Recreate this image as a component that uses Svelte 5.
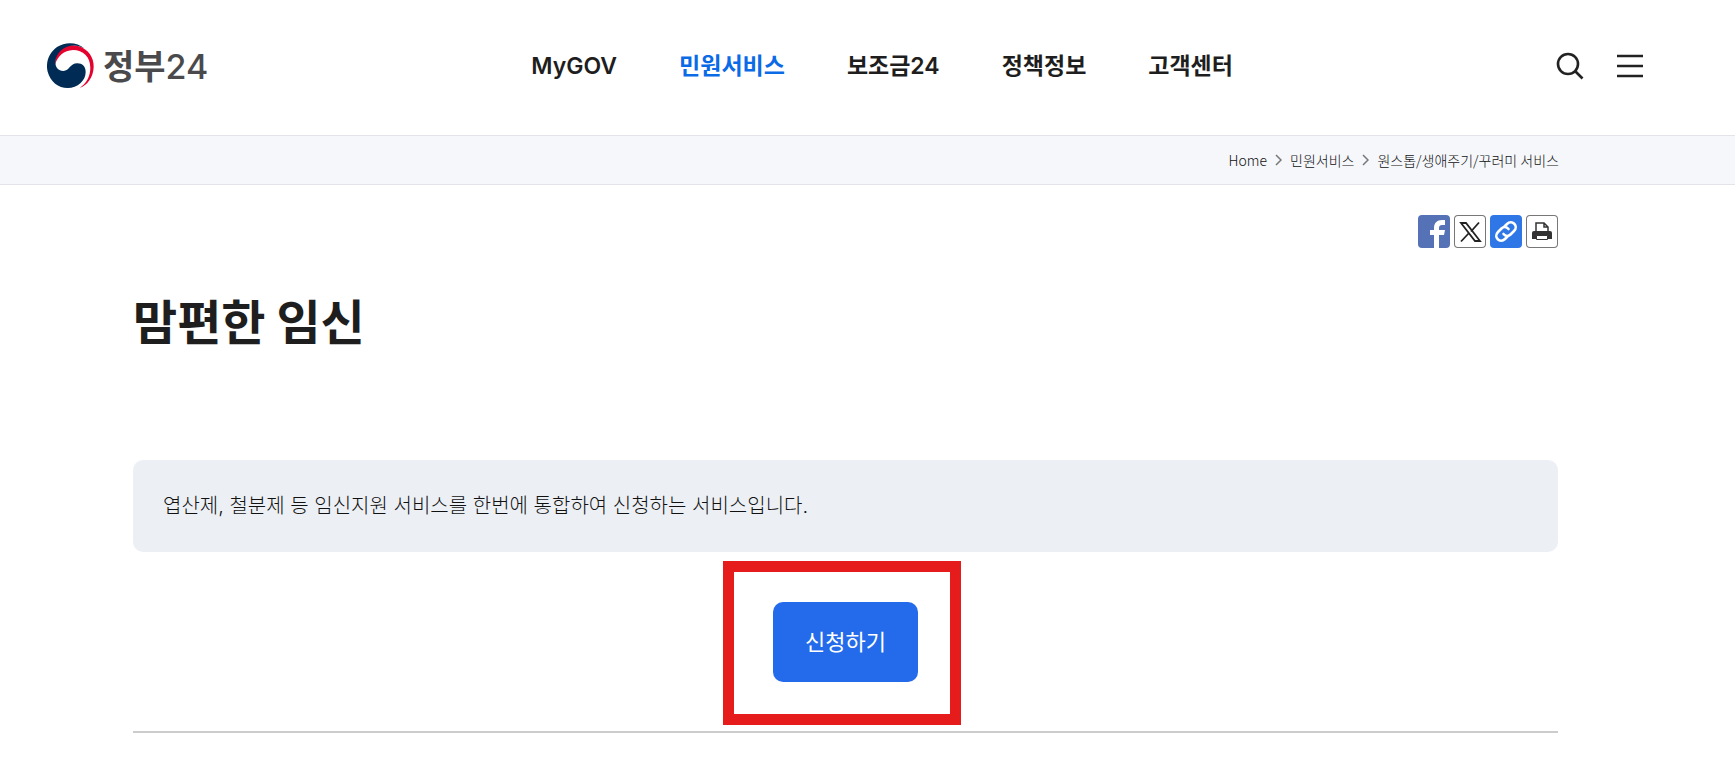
<script>
  const menu = [
    { label: 'MyGOV' },
    { label: '민원서비스', active: true },
    { label: '보조금24' },
    { label: '정책정보' },
    { label: '고객센터' },
  ]
  const crumbs = ['Home', '민원서비스', '원스톱/생애주기/꾸러미 서비스']
</script>

<header class="header">
  <a class="logo" href="#home">
    <svg class="emblem" viewBox="0 0 141 135" aria-hidden="true">
      <path fill="#e4032e" d="M26 29C42 7 72 2 96 10C123 19 141 43 140 72C139 103 121 127 98 135C119 120 130 99 130 74C130 41 108 21 78 21C51 22 31 40 24 65Z" />
      <path fill="#002b54" d="M112 16C91 -3 55 -5 30 12C6 29 -5 58 2 86C10 116 34 135 62 135C92 135 116 113 116 87C116 71 106 61 91 61C68 61 68 84 49 84C34 84 25 73 25 57C27 27 56 4 88 8C97 9 105 12 112 16Z" />
    </svg>
    <span>정부<span class="logo-num">24</span></span>
  </a>

  <nav class="nav">
    {#each menu as item}
      <a class="nav-item" class:active={item.active} href="#menu">{item.label}</a>
    {/each}
  </nav>

  <div class="tools">
    <button class="tool" aria-label="검색">
      <svg viewBox="0 0 28 28">
        <circle cx="12" cy="12" r="10" />
        <path d="M19 19L26.500 26.500" />
      </svg>
    </button>
    <button class="tool" aria-label="전체메뉴">
      <svg viewBox="0 0 28 28"><path d="M1 4h26M1 14h26M1 24h26" /></svg>
    </button>
  </div>
</header>

<nav class="breadcrumb" aria-label="현재 위치">
  {#each crumbs as crumb, i}
    {#if i > 0}
      <svg class="chevron" viewBox="0 0 7 12" aria-hidden="true"><path d="M1 1l5 5l-5 5" /></svg>
    {/if}
    <a href="#crumb">{crumb}</a>
  {/each}
</nav>

<main class="content">
  <div class="share">
    <button class="share-btn facebook" aria-label="페이스북">
      <svg viewBox="0 0 32 33"><path fill="#fff" d="M16 33V20h-4v-5h4v-2c0-5 3-8 8-8h3v5h-3c-2 0-3 1-3 3v2h6l-1 5h-5v13z" /></svg>
    </button>
    <button class="share-btn" aria-label="X">
      <svg viewBox="0 0 32 33">
        <path fill="none" stroke="#222" stroke-width="1.800" d="M7 8h5l14 18h-5zM25 7.500l-8 9M15 18l-8 8.500" />
      </svg>
    </button>
    <button class="share-btn link" aria-label="링크 복사">
      <svg viewBox="0 0 32 33">
        <g fill="none" stroke="#fff" stroke-width="2.600" stroke-linecap="round">
          <path d="M14.500 11.500l2.500-2.500c5-5 12 2 7 7l-3.500 3.500c-2 2-5 2-7-0.500" />
          <path d="M17.500 21.500l-2.500 2.500c-5 5-12-2-7-7l3.500-3.500c2-2 5-2 7 0.500" />
        </g>
      </svg>
    </button>
    <button class="share-btn" aria-label="인쇄">
      <svg viewBox="0 0 32 33">
        <path fill="#fff" stroke="#333" stroke-width="1.500" d="M10 17V8h8l4 4v5M18 8v4h4" />
        <path fill="#333" d="M8 16h16q2 0 2 2v6H6v-6q0-2 2-2z" />
        <path fill="#fff" stroke="#333" d="M10.500 20.500h11v4h-11z" />
      </svg>
    </button>
  </div>

  <h1>맘편한 임신</h1>

  <p class="intro">엽산제, 철분제 등 임신지원 서비스를 한번에 통합하여 신청하는 서비스입니다.</p>

  <div class="actions">
    <div class="highlight">
      <button class="apply">신청하기</button>
    </div>
  </div>
</main>

<style>
  :global(body) { margin: 0; background: #fff; color: #1e1e1e; font-family: 'Noto Sans CJK KR', sans-serif; }
  a { color: inherit; text-decoration: none; }
  button { padding: 0; border: none; background: none; font-family: inherit; cursor: pointer; }
  svg { display: block; }

  .header { display: flex; align-items: center; justify-content: space-between; height: 135px; padding: 0 91px 4px 47px; box-sizing: border-box; }
  .logo { display: flex; align-items: center; gap: 9px; color: #4a4a4c; font-size: 34px; line-height: 45px; font-weight: 700; }
  .logo-num { font-family: Inter, sans-serif; font-weight: 500; }
  .emblem { width: 47px; height: 45px; }
  .nav { display: flex; gap: 62px; }
  .nav-item { font-family: Inter, 'Noto Sans CJK KR', sans-serif; font-size: 23px; line-height: 32px; font-weight: 600; }
  .nav-item.active { color: #0b6ae6; }
  .tools { display: flex; gap: 32px; }
  .tool { width: 28px; height: 28px; }
  .tool svg { fill: none; stroke: #222; stroke-width: 2.6; }

  .breadcrumb { display: flex; align-items: center; justify-content: flex-end; gap: 8px; height: 48px; padding: 0 176px; border: 1px solid #e2e4ea; border-width: 1px 0; background: #f5f7fb; color: #111; font-size: 14px; font-weight: 300; line-height: 20px; }
  .chevron { width: 7px; height: 12px; fill: none; stroke: #777; stroke-width: 1.5; }

  .content { margin: 0 177px 0 133px; border-bottom: 2px solid #ccc; }
  .share { display: flex; justify-content: flex-end; gap: 4px; padding-top: 30px; }
  .share-btn { width: 32px; height: 33px; border-radius: 4px; box-shadow: inset 0 0 0 1px #777; }
  .facebook { background: #5472b5; box-shadow: none; }
  .link { background: #2f76e6; box-shadow: none; }

  h1 { margin: 35px 0 0; font-size: 48px; line-height: 72px; font-weight: 700; }
  .intro { margin: 105px 0 0; padding: 30px; border-radius: 10px; background: #ecf0f5; color: #111; font-family: Inter, 'Noto Sans CJK KR', sans-serif; font-size: 20px; line-height: 32px; font-weight: 300; }
  .actions { display: flex; justify-content: center; padding: 50px 0 49px; }
  .highlight { position: relative; }
  .highlight::after { content: ''; position: absolute; inset: -41px -43px -43px -50px; border: 11px solid #e61c1c; pointer-events: none; }
  .apply { width: 145px; height: 80px; padding-bottom: 4px; border-radius: 10px; background: #246beb; color: #fff; font-size: 22px; }
</style>
